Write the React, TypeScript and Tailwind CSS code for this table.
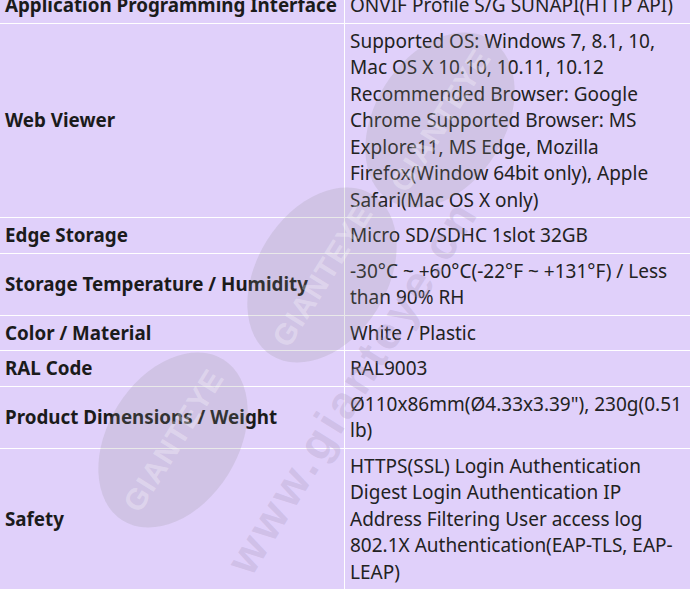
const specs = [
  { label: "Application Programming Interface", value: ["ONVIF Profile S/G SUNAPI(HTTP API)"] },
  {
    label: "Web Viewer",
    value: [
      "Supported OS: Windows 7, 8.1, 10,",
      "Mac OS X 10.10, 10.11, 10.12",
      "Recommended Browser: Google",
      "Chrome Supported Browser: MS",
      "Explore11, MS Edge, Mozilla",
      "Firefox(Window 64bit only), Apple",
      "Safari(Mac OS X only)",
    ],
  },
  { label: "Edge Storage", value: ["Micro SD/SDHC 1slot 32GB"] },
  { label: "Storage Temperature / Humidity", value: ["-30°C ~ +60°C(-22°F ~ +131°F) / Less", "than 90% RH"] },
  { label: "Color / Material", value: ["White / Plastic"] },
  { label: "RAL Code", value: ["RAL9003"] },
  { label: "Product Dimensions / Weight", value: ['Ø110x86mm(Ø4.33x3.39"), 230g(0.51', "lb)"] },
  {
    label: "Safety",
    value: [
      "HTTPS(SSL) Login Authentication",
      "Digest Login Authentication IP",
      "Address Filtering User access log",
      "802.1X Authentication(EAP-TLS, EAP-",
      "LEAP)",
    ],
  },
];

// faded logo stamps laid over the table
const stamps = [
  { x: 440, y: 120 },
  { x: 322, y: 275 },
  { x: 173, y: 440 },
];

const Stamp = ({ x, y }: { x: number; y: number }) => (
  <div
    className="absolute flex h-[130px] w-[190px] -rotate-[58deg] items-center justify-center rounded-[50%] bg-[#8f8f8f]/20"
    style={{ left: x - 95, top: y - 65 }}
  >
    <span className="text-[30px] font-bold tracking-[1px] text-white/30 [font-family:'Liberation_Sans',sans-serif]">
      GIANTEYE
    </span>
  </div>
);

export default function App() {
  return (
    <div className="relative h-[590px] w-[690px] overflow-hidden bg-[#e0d0fa] [font-family:'Noto_Sans',sans-serif]">
      <div className="-mt-[12px] flex flex-col">
        {specs.map((row) => (
          <div key={row.label} className="grid grid-cols-[345px_345px] border-b border-white">
            <div className="flex items-center whitespace-nowrap border-r border-white px-[5px] py-[4px] text-[18.8px] font-bold leading-[26.5px] text-[#1b1b1b]">
              {row.label}
            </div>
            <div className="whitespace-nowrap px-[5px] py-[4px] text-[19px] leading-[26.5px] text-[#222]">
              {row.value.map((line) => (
                <div key={line}>{line}</div>
              ))}
            </div>
          </div>
        ))}
      </div>
      <div className="pointer-events-none absolute inset-0">
        {stamps.map((s) => (
          <Stamp key={s.x} {...s} />
        ))}
        <div className="absolute left-[130px] top-[340px] w-[460px] -rotate-[58deg] text-[46px] font-bold tracking-[4px] text-[#a898bd]/30 [font-family:'Liberation_Sans',sans-serif]">
          www.gianteye.cn
        </div>
      </div>
    </div>
  );
}
